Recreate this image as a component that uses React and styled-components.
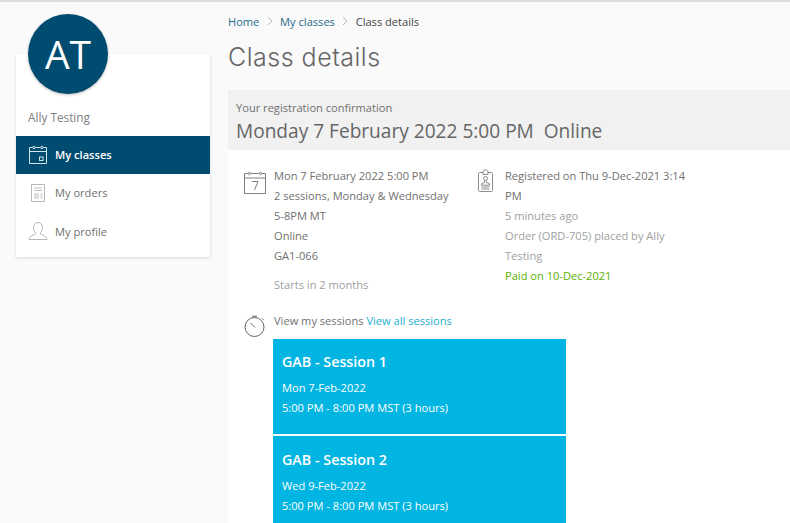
import React from "react";
import styled, { createGlobalStyle } from "styled-components";

const Global = createGlobalStyle`
  html, body { margin: 0; padding: 0; height: 100%; overflow: hidden; }
  body { background: #fafafa; font-family: "Open Sans", "Liberation Sans", sans-serif; }
  * { box-sizing: border-box; }
`;

const Page = styled.div`
  width: 790px;
  height: 523px;
  overflow: hidden;
  border-top: 2px solid #dcdcdc;
  display: flex;
  align-items: flex-start;
`;
const Sidebar = styled.aside`
  width: 194px;
  margin: 12px 18px 0 16px;
  flex: none;
`;
const Avatar = styled.div`
  position: relative;
  z-index: 1;
  width: 80px;
  height: 80px;
  margin: 0 0 -40px 12px;
  border-radius: 50%;
  background: #004b70;
  color: #fff;
  font-size: 39px;
  line-height: 80px;
  text-align: center;
  box-shadow: 0 1px 3px rgba(0,0,0,.25);
`;
const Card = styled.div`
  background: #fff;
  box-shadow: 0 1px 3px rgba(0,0,0,.14);
  padding: 53px 0 7px;
`;
const UserName = styled.div`
  font-size: 11.8px;
  line-height: 20px;
  color: #808080;
  padding-left: 12px;
  margin-bottom: 9px;
`;
const NavItem = styled.div`
  height: 38px;
  padding: 0 0 1px 12px;
  display: flex;
  align-items: center;
  gap: 7px;
  font-size: 11.1px;
  background: ${p => (p.$active ? "#004b70" : "transparent")};
  color: ${p => (p.$active ? "#fff" : "#707070")};
  font-weight: ${p => (p.$active ? 600 : 400)};
  &:last-child { padding-bottom: 0; }
`;
const Main = styled.main`
  flex: 1;
  min-width: 0;
`;
const Crumbs = styled.nav`
  display: flex;
  align-items: center;
  height: 20px;
  margin-top: 9px;
  font-size: 11.1px;
`;
const Crumb = styled.span`
  color: ${p => (p.$link ? "#1f6a8a" : "#444")};
`;
const Title = styled.h1`
  margin: 10px 0 0;
  font-family: Inter, "Open Sans", sans-serif;
  font-weight: 300;
  font-size: 25px;
  line-height: 32px;
  color: #666;
  letter-spacing: .5px;
`;
const Banner = styled.div`
  margin-top: 17px;
  height: 60px;
  background: #f1f1f1;
  padding: 9px 8px 0;
`;
const BannerLabel = styled.div`
  font-size: 11.1px;
  line-height: 18px;
  color: #707070;
`;
const BannerText = styled.div`
  font-size: 19.1px;
  line-height: 28px;
  color: #666;
  white-space: pre;
`;
const Content = styled.div`
  background: #fff;
  height: 400px;
  padding: 16px 0 0 16px;
`;
const Columns = styled.div`
  display: flex;
`;
const InfoBlock = styled.div`
  display: flex;
  width: ${p => p.$w}px;
  flex: none;
`;
const IconSlot = styled.div`
  width: ${p => p.$w || 30}px;
  padding-top: ${p => p.$top || 0}px;
  flex: none;
  svg { display: block; }
`;
const Lines = styled.div`
  width: ${p => (p.$w ? p.$w + "px" : "auto")};
  font-size: 11.1px;
  line-height: 20px;
`;
const Line = styled.div`
  color: ${p => p.$color || "#707070"};
  margin-top: ${p => p.$gap || 0}px;
`;
const SessionsRow = styled.div`
  display: flex;
  margin-top: 16px;
`;
const SessionsHead = styled.div`
  font-size: 11.1px;
  line-height: 20px;
  color: #707070;
  margin-bottom: 8px;
`;
const Link = styled.span`
  color: #22aecd;
`;
const Session = styled.div`
  width: 293px;
  height: 95px;
  margin-left: -1px;
  background: #00b5e2;
  color: #fff;
  padding: 12px 9px 0;
  margin-bottom: 2px;
  & + & { padding-top: 13px; }
`;
const SessionTitle = styled.div`
  font-size: 14.3px;
  font-weight: 600;
  line-height: 22px;
  margin-bottom: 5px;
`;
const SessionLine = styled.div`
  font-size: 11.1px;
  line-height: 20.2px;
`;
const Sep = styled.svg`
  margin: 0 7.25px 0 7.5px;
`;

const Chevron = () => (
  <Sep width="6" height="10" viewBox="0 0 6 10" fill="none" stroke="#bbb" strokeWidth="1">
    <path d="M1 1l4 4-4 4" />
  </Sep>
);

const ClassesIcon = () => (
  <svg width="20" height="20" viewBox="0 0 20 20" fill="none" stroke="#d5e3ea" strokeWidth="1">
    <path d="M1.500 2.500h17v16h-17zM1.500 6.500h17" />
    <circle cx="6" cy="2.500" r="1.200" fill="#004b70" /><circle cx="14" cy="2.500" r="1.200" fill="#004b70" />
    <rect x="11.500" y="12" width="3.500" height="3.500" />
  </svg>
);
const OrdersIcon = () => (
  <svg width="20" height="20" viewBox="0 0 20 20" fill="none" stroke="#b8b8b8" strokeWidth="1">
    <path d="M3.500 1.500h13v17h-13z" />
    <path d="M6 5h8M6 7.500h8M6 11h5M6 13h5M6 15h5M12.500 11h2M12.500 13h2M12.500 15h2" strokeWidth=".9" />
  </svg>
);
const ProfileIcon = () => (
  <svg width="20" height="20" viewBox="0 0 20 20" fill="none" stroke="#b8b8b8" strokeWidth="1">
    <path d="M10 1.500c-3 0-4.500 2.200-4.500 5 0 2.400 1 4 2 5v1.500c-1.500 1.200-6 1.500-6.500 5.500h18c-.5-4-5-4.300-6.500-5.500V11.500c1-1 2-2.600 2-5 0-2.800-1.500-5-4.500-5z" />
  </svg>
);
const DateIcon = () => (
  <svg width="23" height="23" viewBox="0 0 23 23" fill="none" stroke="#808080" strokeWidth="1">
    <path d="M.5 2.500h21v20H.5zM.5 7h21" />
    <circle cx="5.500" cy="2.500" r="1.200" fill="#fff" /><circle cx="16.500" cy="2.500" r="1.200" fill="#fff" />
    <path d="M8 10.500h6l-3.500 8.500" />
  </svg>
);
const BadgeIcon = () => (
  <svg width="16" height="24" viewBox="0 0 16 24" fill="none" stroke="#808080" strokeWidth=".9">
    <rect x=".5" y="3.500" width="14" height="19" rx="1" />
    <path d="M5 5.500V3c0-3 5-3 5 0v2.500z" fill="#fff" />
    <circle cx="7.500" cy="9.500" r="2" />
    <path d="M6.500 11.500v2l-3 1.200v1.500h8v-1.500l-3-1.200v-2M3.500 18h8M3.500 20h8" />
  </svg>
);
const TimerIcon = () => (
  <svg width="22" height="24" viewBox="0 0 22 24" fill="none" stroke="#666" strokeWidth="1">
    <circle cx="10.500" cy="13" r="9.500" />
    <path d="M8 2.200h5M10.500 2.500v1M18 4.500l1.500 1.500M6.500 9l4.500 4.500" />
  </svg>
);

export default function App() {
  return (
    <Page>
      <Global />
      <Sidebar>
        <Avatar>AT</Avatar>
        <Card>
          <UserName>Ally Testing</UserName>
          <NavItem $active><ClassesIcon />My classes</NavItem>
          <NavItem><OrdersIcon />My orders</NavItem>
          <NavItem><ProfileIcon />My profile</NavItem>
        </Card>
      </Sidebar>
      <Main>
        <Crumbs>
          <Crumb $link>Home</Crumb><Chevron />
          <Crumb $link>My classes</Crumb><Chevron />
          <Crumb>Class details</Crumb>
        </Crumbs>
        <Title>Class details</Title>
        <Banner>
          <BannerLabel>Your registration confirmation</BannerLabel>
          <BannerText>Monday 7 February 2022 5:00 PM  Online</BannerText>
        </Banner>
        <Content>
          <Columns>
            <InfoBlock $w={234}>
              <IconSlot $top={5}><DateIcon /></IconSlot>
              <Lines>
                <Line>Mon 7 February 2022 5:00 PM</Line>
                <Line>2 sessions, Monday &amp; Wednesday</Line>
                <Line>5-8PM MT</Line>
                <Line>Online</Line>
                <Line>GA1-066</Line>
                <Line $color="#a0a0a0" $gap={9}>Starts in 2 months</Line>
              </Lines>
            </InfoBlock>
            <InfoBlock $w={240}>
              <IconSlot $w={27} $top={3}><BadgeIcon /></IconSlot>
              <Lines $w={190}>
                <Line>Registered on Thu 9-Dec-2021 3:14 PM</Line>
                <Line $color="#a0a0a0">5 minutes ago</Line>
                <Line $color="#a0a0a0">Order (ORD-705) placed by Ally Testing</Line>
                <Line $color="#5cb000">Paid on 10-Dec-2021</Line>
              </Lines>
            </InfoBlock>
          </Columns>
          <SessionsRow>
            <IconSlot $top={3}><TimerIcon /></IconSlot>
            <div>
              <SessionsHead>View my sessions <Link>View all sessions</Link></SessionsHead>
              <Session>
                <SessionTitle>GAB - Session 1</SessionTitle>
                <SessionLine>Mon 7-Feb-2022</SessionLine>
                <SessionLine>5:00 PM - 8:00 PM MST (3 hours)</SessionLine>
              </Session>
              <Session>
                <SessionTitle>GAB - Session 2</SessionTitle>
                <SessionLine>Wed 9-Feb-2022</SessionLine>
                <SessionLine>5:00 PM - 8:00 PM MST (3 hours)</SessionLine>
              </Session>
            </div>
          </SessionsRow>
        </Content>
      </Main>
    </Page>
  );
}
